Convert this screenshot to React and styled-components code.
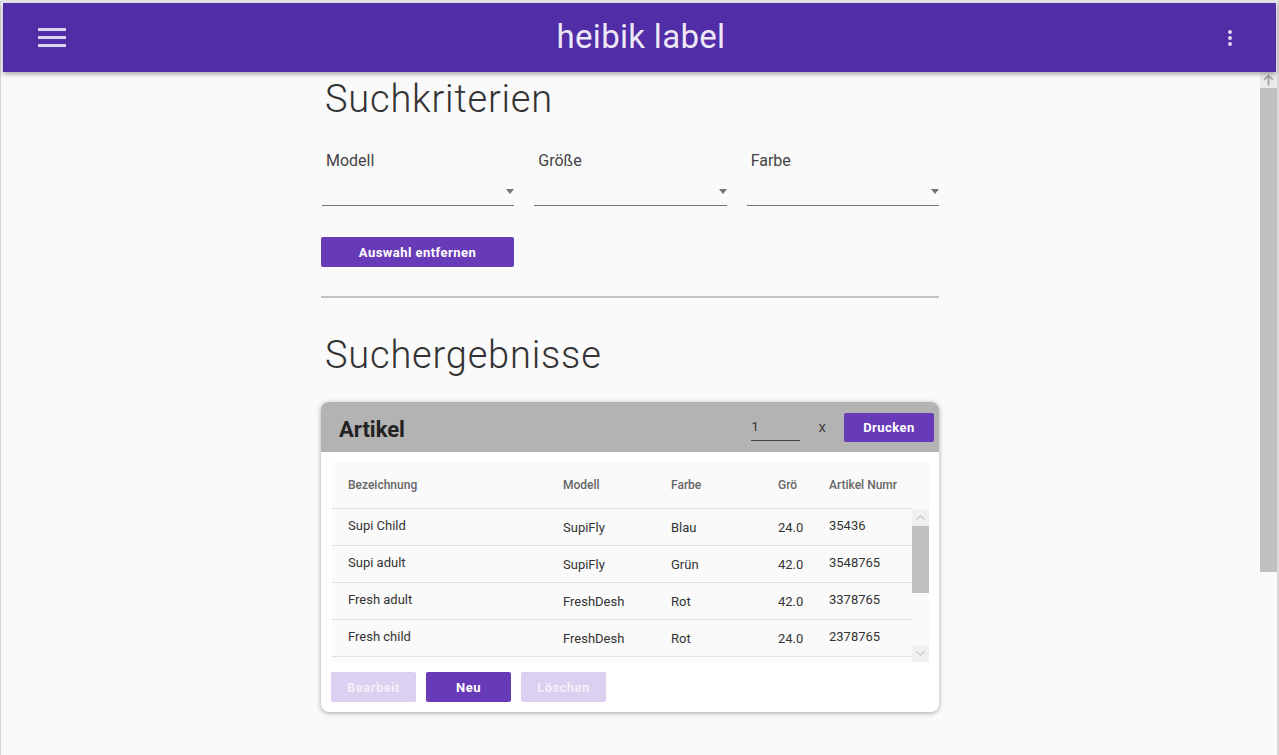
import React from "react";
import styled, { createGlobalStyle } from "styled-components";

const GlobalStyle = createGlobalStyle`
  html, body {
    margin: 0;
    padding: 0;
    height: 100%;
    overflow: hidden;
  }
  body {
    font-family: Roboto, "Liberation Sans", Arial, sans-serif;
    background: #fafafa;
  }
  * { box-sizing: border-box; }
`;

const rows = [
  { name: "Supi Child", model: "SupiFly", color: "Blau", size: "24.0", nr: "35436" },
  { name: "Supi adult", model: "SupiFly", color: "Grün", size: "42.0", nr: "3548765" },
  { name: "Fresh adult", model: "FreshDesh", color: "Rot", size: "42.0", nr: "3378765" },
  { name: "Fresh child", model: "FreshDesh", color: "Rot", size: "24.0", nr: "2378765" },
];

const filters = ["Modell", "Größe", "Farbe"];

const App = () => {
  return (
    <Frame>
      <GlobalStyle />
      <AppBar>
        <IconButton aria-label="menu">
          <svg width="28" height="19" viewBox="0 0 28 19">
            <rect x="0" y="0" width="28" height="3" fill="#ddd4f0" />
            <rect x="0" y="8" width="28" height="3" fill="#ddd4f0" />
            <rect x="0" y="16" width="28" height="3" fill="#ddd4f0" />
          </svg>
        </IconButton>
        <Title>heibik label</Title>
        <IconButton aria-label="more">
          <svg width="4" height="16" viewBox="0 0 4 16">
            <circle cx="2" cy="2" r="2" fill="#ddd4f0" />
            <circle cx="2" cy="8" r="2" fill="#ddd4f0" />
            <circle cx="2" cy="14" r="2" fill="#ddd4f0" />
          </svg>
        </IconButton>
      </AppBar>

      <Content>
        <Viewport>
          <Column>
            <Heading>Suchkriterien</Heading>
            <FilterRow>
              {filters.map((f) => (
                <Filter key={f}>
                  <FilterLabel>{f}</FilterLabel>
                  <SelectField>
                    <Caret />
                  </SelectField>
                </Filter>
              ))}
            </FilterRow>
            <ClearButton>Auswahl entfernen</ClearButton>
            <Divider />

            <Heading $top={36}>Suchergebnisse</Heading>

            <Card>
              <CardHeader>
                <CardTitle>Artikel</CardTitle>
                <CountInput defaultValue="1" />
                <Times>x</Times>
                <PrimaryButton $w={90} $h={29}>Drucken</PrimaryButton>
              </CardHeader>

              <Table>
                <TableMain>
                  <HeadRow>
                    <HeadCell>Bezeichnung</HeadCell>
                    <HeadCell>Modell</HeadCell>
                    <HeadCell>Farbe</HeadCell>
                    <HeadCell>Grö</HeadCell>
                    <HeadCell>Artikel Numr</HeadCell>
                  </HeadRow>
                  <Body>
                    {rows.map((r) => (
                      <Row key={r.nr}>
                        <Cell $up>{r.name}</Cell>
                        <Cell>{r.model}</Cell>
                        <Cell>{r.color}</Cell>
                        <Cell>{r.size}</Cell>
                        <Cell $up>{r.nr}</Cell>
                      </Row>
                    ))}
                  </Body>
                </TableMain>
                <TableScroll>
                  <ScrollButton>
                    <svg width="9" height="5" viewBox="0 0 9 5">
                      <path d="M0.5 4.5 L4.5 0.8 L8.5 4.5" fill="none" stroke="#b0b0b0" strokeWidth="1" />
                    </svg>
                  </ScrollButton>
                  <Thumb $h={67} />
                  <Track />
                  <ScrollButton>
                    <svg width="9" height="5" viewBox="0 0 9 5">
                      <path d="M0.5 0.5 L4.5 4.2 L8.5 0.5" fill="none" stroke="#b0b0b0" strokeWidth="1" />
                    </svg>
                  </ScrollButton>
                </TableScroll>
              </Table>

              <Actions>
                <PrimaryButton $w={85} $disabled>Bearbeit</PrimaryButton>
                <PrimaryButton $w={85}>Neu</PrimaryButton>
                <PrimaryButton $w={85} $disabled>Löschen</PrimaryButton>
              </Actions>
            </Card>
          </Column>
        </Viewport>

        <PageScroll>
          <PageScrollButton>
            <svg width="11" height="12" viewBox="0 0 11 12">
              <path d="M5.5 1.5 V11.5 M1.2 5.8 L5.5 1.5 L9.8 5.8" fill="none" stroke="#a6a6a6" strokeWidth="1.8" />
            </svg>
          </PageScrollButton>
          <Thumb $h={484} />
        </PageScroll>
      </Content>
    </Frame>
  );
};

const Frame = styled.div`
  height: 100vh;
  display: flex;
  flex-direction: column;
  border-top: 3px solid #e6e6e6;
  border-left: 1px solid #d4d4d4;
  border-right: 2px solid #d9d9d9;
  background: #fafafa;
`;

const AppBar = styled.header`
  flex: 0 0 69px;
  margin: 0 1px 0 2px;
  background: #512da8;
  display: flex;
  align-items: center;
  justify-content: space-between;
  padding: 0 29px 0 32px;
  box-shadow: 0 2px 5px rgba(0, 0, 0, 0.35);
  position: relative;
  z-index: 2;
`;

const IconButton = styled.div`
  display: flex;
  align-items: center;
  justify-content: center;
  min-width: 34px;
  height: 34px;
`;

const Title = styled.h1`
  margin: 0 0 2px;
  font-size: 33px;
  font-weight: 400;
  color: #ede7f6;
  letter-spacing: 0.3px;
`;

const Content = styled.main`
  flex: 1;
  min-height: 0;
  display: flex;
`;

const Viewport = styled.div`
  flex: 1;
  overflow: hidden;
  padding-right: 1px;
`;

const PageScroll = styled.div`
  flex: 0 0 17px;
  display: flex;
  flex-direction: column;
`;

const PageScrollButton = styled.div`
  height: 16px;
  background: #ebebeb;
  display: flex;
  align-items: center;
  justify-content: center;
`;

const Thumb = styled.div`
  height: ${(p) => p.$h}px;
  flex: 0 0 auto;
  background: #c1c1c1;
`;

const Track = styled.div`
  flex: 1;
`;

const Column = styled.div`
  width: 618px;
  margin: 0 auto;
  padding-top: 6px;
`;

const Heading = styled.h2`
  margin: ${(p) => p.$top || 0}px 0 0;
  padding-left: 4px;
  font-size: 38px;
  line-height: 43px;
  font-weight: 300;
  letter-spacing: 0.8px;
  color: #333;
`;

const FilterRow = styled.div`
  display: grid;
  grid-template-columns: repeat(3, 1fr);
  column-gap: 20px;
  margin-top: 30px;
  padding-left: 1px;
`;

const Filter = styled.div`
  display: flex;
  flex-direction: column;
`;

const FilterLabel = styled.label`
  font-size: 16px;
  line-height: 19px;
  color: #444;
  padding-left: 4px;
`;

const SelectField = styled.div`
  height: 36px;
  border-bottom: 1px solid #757575;
  display: flex;
  align-items: flex-end;
  justify-content: flex-end;
  padding: 0 0 11px;
`;

const Caret = styled.span`
  width: 0;
  height: 0;
  border-left: 4px solid transparent;
  border-right: 4px solid transparent;
  border-top: 5px solid #757575;
`;

const PrimaryButton = styled.button`
  width: ${(p) => p.$w}px;
  height: ${(p) => p.$h || 30}px;
  border: none;
  border-radius: 2px;
  padding: 0;
  background: ${(p) => (p.$disabled ? "#dbd0ef" : "#673ab7")};
  color: ${(p) => (p.$disabled ? "#f3effa" : "#ffffff")};
  font-family: Roboto, "Liberation Sans", Arial, sans-serif;
  font-size: 13px;
  font-weight: 700;
  letter-spacing: 0.45px;
  cursor: pointer;
`;

const ClearButton = styled(PrimaryButton).attrs({ $w: 193 })`
  margin-top: 31px;
  display: block;
`;

const Divider = styled.hr`
  margin: 29px 0 0;
  border: none;
  height: 2px;
  background: #c2c2c2;
`;

const Card = styled.section`
  margin-top: 25px;
  background: #ffffff;
  border-radius: 8px;
  overflow: hidden;
  box-shadow: 0 1px 5px rgba(0, 0, 0, 0.35);
`;

const CardHeader = styled.div`
  height: 50px;
  background: #b3b3b3;
  display: flex;
  align-items: center;
  padding: 0 5px 0 18px;
`;

const CardTitle = styled.h3`
  margin: 0 auto 0 0;
  padding-top: 4px;
  font-size: 22px;
  font-weight: 700;
  color: #222;
`;

const CountInput = styled.input`
  width: 49px;
  height: 28px;
  border: none;
  border-bottom: 1px solid #444;
  background: transparent;
  padding: 0 1px;
  font-family: Roboto, "Liberation Sans", Arial, sans-serif;
  font-size: 13px;
  color: #333;
  outline: none;
`;

const Times = styled.span`
  margin: 0 18px 0 19px;
  font-size: 15px;
  color: #444;
`;

const Table = styled.div`
  margin: 10px 10px 0 11px;
  height: 200px;
  background: #fafafa;
  display: flex;
`;

const TableMain = styled.div`
  flex: 1;
  min-width: 0;
`;

const TableScroll = styled.div`
  flex: 0 0 17px;
  display: flex;
  flex-direction: column;
  padding-top: 47px;
`;

const ScrollButton = styled.div`
  height: 17px;
  flex: 0 0 auto;
  background: #f0f0f0;
  display: flex;
  align-items: center;
  justify-content: center;
`;

const columns = "215px 108px 107px 51px 1fr";

const HeadRow = styled.div`
  display: grid;
  grid-template-columns: ${columns};
  align-items: center;
  height: 47px;
  border-bottom: 1px solid #e0e0e0;
`;

const HeadCell = styled.div`
  padding-left: 16px;
  font-size: 12px;
  font-weight: 500;
  color: #666;
  white-space: nowrap;
`;

const Body = styled.div`
  height: 153px;
  overflow: hidden;
`;

const Row = styled.div`
  display: grid;
  grid-template-columns: ${columns};
  align-items: center;
  height: 37px;
  border-bottom: 1px solid #e0e0e0;
`;

const Cell = styled.div`
  padding-left: 16px;
  padding-bottom: ${(p) => (p.$up ? 3 : 0)}px;
  font-size: 13px;
  color: #333;
  white-space: nowrap;
`;

const Actions = styled.div`
  display: flex;
  gap: 10px;
  padding: 10px;
`;

export default App;
